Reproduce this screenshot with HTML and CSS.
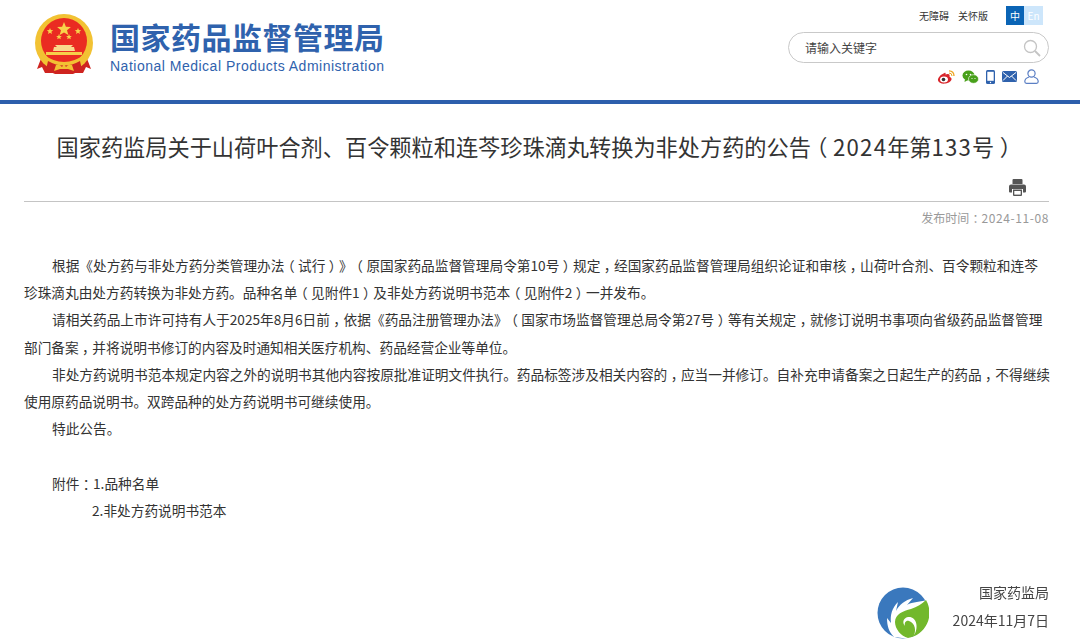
FILE: index.html
```html
<!DOCTYPE html>
<html lang="zh-CN">
  <head>
    <meta charset="UTF-8" />
    <title>国家药品监督管理局</title>
    <link rel="stylesheet" href="styles.css">
  </head>
  <body>
    <header class="site-header">
      <div class="brand">
        <svg class="emblem" viewBox="0 0 58 60" width="58" height="60">
          <path d="M7 42 L2 55 L7 53 L10 59 L48 59 L51 53 L56 55 L51 42 Z" fill="#cf2420"/>
          <circle cx="29" cy="29" r="29" fill="#f2c233"/>
          <circle cx="29" cy="27" r="23" fill="#ea2b22"/>
          <path d="M29 8 l1.900 4.700 5 .3 -3.900 3.200 1.300 4.900 -4.300 -2.700 -4.300 2.700 1.300 -4.900 -3.900 -3.200 5 -.3 Z" fill="#f8d24a"/>
          <path d="M15 14 l.9 2.100 2.300 .1 -1.800 1.500 .6 2.200 -2 -1.200 -2 1.200 .6 -2.200 -1.800 -1.500 2.300 -.1 Z" fill="#f8d24a"/>
          <path d="M43 14 l.9 2.100 2.300 .1 -1.800 1.500 .6 2.200 -2 -1.200 -2 1.200 .6 -2.200 -1.800 -1.500 2.300 -.1 Z" fill="#f8d24a"/>
          <path d="M24 20 l.8 1.900 2.100 .1 -1.600 1.300 .5 2 -1.800 -1.100 -1.800 1.100 .5 -2 -1.600 -1.300 2.100 -.1 Z" fill="#f8d24a"/>
          <path d="M34 20 l.8 1.900 2.100 .1 -1.600 1.300 .5 2 -1.800 -1.100 -1.800 1.100 .5 -2 -1.600 -1.300 2.100 -.1 Z" fill="#f8d24a"/>
          <path d="M20 31 L38 31 L36 33 L39 33 L40 37 L18 37 L19 33 L22 33 Z" fill="#f9d98c"/>
          <path d="M11 38 L47 38 L47 41 L11 41 Z" fill="#f6cf4a"/>
          <path d="M8 40 Q29 56 50 40 L52 45 Q29 62 6 45 Z" fill="#f2c233"/>
          <path d="M13 47 Q29 56 45 47 L47 56 L38 60 L20 60 L11 56 Z" fill="#cf2420"/>
          <path d="M19 57 L21 51 Q25 50 27 53 L29 50 L31 53 Q33 50 37 51 L39 57 L33 55 L25 55 Z" fill="#f2c233"/>
        </svg>
        <div class="brand-text">
          <div class="brand-cn">国家药品监督管理局</div>
          <div class="brand-en">National Medical Products Administration</div>
        </div>
      </div>
      <div class="tools">
        <div class="tools-top">
          <a class="tool-link">无障碍</a>
          <a class="tool-link">关怀版</a>
          <div class="lang">
            <span class="lang-cn">中</span><span class="lang-en">En</span>
          </div>
        </div>
        <div class="search">
          <span>请输入关键字</span>
          <svg viewBox="0 0 18 18" width="18" height="18">
            <circle cx="7.500" cy="7.500" r="6" fill="none" stroke="#c4c4c4" stroke-width="1.300"/>
            <path d="M12 12 L17 17" stroke="#c4c4c4" stroke-width="1.800"/>
          </svg>
        </div>
        <div class="social">
          <svg viewBox="0 0 18 14" width="18" height="14">
            <path d="M7.500 3 C3.500 4.500 .5 8 1 10.500 C1.500 13 5 14 8.500 13.500 C12.500 13 15 10.500 14.500 8.500 C14 7 12.500 7 12.500 6.500 C13 5 12.500 3.800 10.500 4 L8.500 4.500 C8.800 3 8.500 2.600 7.500 3 Z" fill="#d8262b"/>
            <ellipse cx="7" cy="9.500" rx="4" ry="3" fill="#fff"/>
            <circle cx="6.500" cy="9.500" r="1.800" fill="#333"/>
            <path d="M12 .8 Q17 1 17 6" fill="none" stroke="#eda520" stroke-width="1.300"/>
            <path d="M12 3 Q15 3 15 6" fill="none" stroke="#eda520" stroke-width="1"/>
          </svg>
          <svg viewBox="0 0 17 14" width="17" height="14">
            <ellipse cx="6.500" cy="5.500" rx="6" ry="5" fill="#48a01a"/>
            <path d="M3 9 L2.500 12 L6 10 Z" fill="#48a01a"/>
            <ellipse cx="11.500" cy="9" rx="5" ry="4.300" fill="#48a01a" stroke="#fff" stroke-width=".6"/>
            <circle cx="4.500" cy="4.500" r=".8" fill="#fff"/>
            <circle cx="8.500" cy="4.500" r=".8" fill="#fff"/>
            <circle cx="10" cy="8.500" r=".6" fill="#fff"/>
            <circle cx="13" cy="8.500" r=".6" fill="#fff"/>
          </svg>
          <svg viewBox="0 0 9 14" width="9" height="14">
            <rect x="0" y="0" width="9" height="14" rx="1.500" fill="#2f62ad"/>
            <rect x="1.300" y="1.800" width="6.400" height="9" fill="#fff"/>
            <circle cx="4.500" cy="12.500" r=".7" fill="#fff"/>
          </svg>
          <svg viewBox="0 0 15 11" width="15" height="11">
            <rect width="15" height="11" rx="1.500" fill="#2f62ad"/>
            <path d="M1 1.500 L7.500 6.500 L14 1.500 M1 9.500 L5.500 5 M14 9.500 L9.500 5" fill="none" stroke="#fff" stroke-width="1"/>
          </svg>
          <svg viewBox="0 0 15 15" width="15" height="15">
            <circle cx="7.500" cy="4.500" r="3.600" fill="none" stroke="#5b7fc4" stroke-width="1.200"/>
            <path d="M5 8 C2 9 .8 11 .8 12.500 Q.8 14.300 2.500 14.300 L12.500 14.300 Q14.200 14.300 14.200 12.500 C14.200 11 13 9 10 8" fill="none" stroke="#5b7fc4" stroke-width="1.200"/>
          </svg>
        </div>
      </div>
    </header>

    <main class="article">
      <h1 class="article-title">国家药监局关于山荷叶合剂、百令颗粒和连芩珍珠滴丸转换为非处方药的公告<span class="mid">（</span><span class="num">2024</span>年第<span class="num">133</span>号<span class="mid">）</span></h1>
      <div class="print-row">
        <svg viewBox="0 0 17 17" width="17" height="17">
          <path d="M4.500 0 L12.500 0 Q13.500 0 13.500 1 L13.500 5 L3.500 5 L3.500 1 Q3.500 0 4.500 0 Z" fill="#555"/>
          <path d="M2 5.500 L15 5.500 Q17 5.500 17 7.500 L17 12.500 Q17 13.500 16 13.500 L14 13.500 L14 10 L3 10 L3 13.500 L1 13.500 Q0 13.500 0 12.500 L0 7.500 Q0 5.500 2 5.500 Z" fill="#555"/>
          <path d="M4 10.500 L13 10.500 L13 16 Q13 17 12 17 L5 17 Q4 17 4 16 Z" fill="#555"/>
          <rect x="5.300" y="12" width="6.400" height="3.600" fill="#fff"/>
        </svg>
      </div>
      <div class="publish-date">发布时间<span class="mid">：</span><span class="date-num">2024-11-08</span></div>
      <div class="article-body">
        <p>根据《处方药与非处方药分类管理办法<span class="mid">（</span>试行<span class="mid">）</span>》<span class="mid">（</span>原国家药品监督管理局令第10号<span class="mid">）</span>规定<span class="mid">，</span>经国家药品监督管理局组织论证和审核<span class="mid">，</span>山荷叶合剂、百令颗粒和连芩<br>珍珠滴丸由处方药转换为非处方药。品种名单<span class="mid">（</span>见附件1<span class="mid">）</span>及非处方药说明书范本<span class="mid">（</span>见附件2<span class="mid">）</span>一并发布。</p>
        <p>请相关药品上市许可持有人于2025年8月6日前<span class="mid">，</span>依据《药品注册管理办法》<span class="mid">（</span>国家市场监督管理总局令第27号<span class="mid">）</span>等有关规定<span class="mid">，</span>就修订说明书事项向省级药品监督管理<br>部门备案<span class="mid">，</span>并将说明书修订的内容及时通知相关医疗机构、药品经营企业等单位。</p>
        <p>非处方药说明书范本规定内容之外的说明书其他内容按原批准证明文件执行。药品标签涉及相关内容的<span class="mid">，</span>应当一并修订。自补充申请备案之日起生产的药品<span class="mid">，</span>不得继续<br>使用原药品说明书。双跨品种的处方药说明书可继续使用。</p>
        <p>特此公告。</p>
        <p class="blank">&nbsp;</p>
        <p>附件<span class="mid">：</span>1.品种名单</p>
        <p class="attach-second">2.非处方药说明书范本</p>
      </div>
    </main>

    <div class="watermark">
      <svg viewBox="0 0 52 52" width="52" height="52">
        <circle cx="26" cy="26" r="25.500" fill="#3a78bd"/>
        <path d="M50 13 C42 15 34 15 30 18 L36 11 C28 13 22 18 19 24 L21 15 C15 21 13 28 14 36 L10 31 C10 39 12 45 17 50 L33 52 L50 20 Z" fill="#fff"/>
        <path d="M49 13 A25.500 25.500 0 0 1 31 51 C24 49 18 42 18 35 C18 27 26 24 34 22 C40 20 45 17 49 13 Z" fill="#72b82c"/>
        <path d="M36 50 C40 44 38 36 32 34 C29 33 27 36 28 39 C25 36 26 31 31 30 C39 29 43 40 36 50 Z" fill="#fff"/>
      </svg>
      <div class="watermark-text">
        <div>国家药监局</div>
        <div>2024年11月7日</div>
      </div>
    </div>
  </body>
</html>
```

FILE: styles.css
```css
body {
  margin: 0;
  padding: 0;
  background: #fff;
  color: #333;
  font-family: "Noto Sans CJK SC", "Liberation Sans", sans-serif;
  text-spacing-trim: space-all;
  height: 644px;
  overflow: hidden;
  position: relative;
}

/* half-width glyph padded back out, so the mark sits centred in a full em */
.mid {
  font-feature-settings: "halt";
  padding: 0 .25em;
}

.site-header {
  display: flex;
  justify-content: space-between;
  height: 100px;
  border-bottom: 4px solid #2d5fac;
}

.brand {
  display: flex;
  align-items: flex-start;
  gap: 17px;
  padding: 14px 0 0 35px;
}

.brand-cn {
  font-size: 30px;
  font-weight: 700;
  line-height: 36px;
  margin-top: 4px;
  color: #2f62ad;
  letter-spacing: .5px;
  white-space: nowrap;
}

.brand-en {
  font-family: "Liberation Sans", sans-serif;
  font-size: 14px;
  line-height: 18px;
  margin-top: 3px;
  color: #2f62ad;
  letter-spacing: .5px;
  white-space: nowrap;
}

.tools {
  width: 261px;
  padding: 6px 31px 0 0;
}

.tools-top {
  display: flex;
  align-items: center;
  height: 19px;
  font-size: 10px;
  color: #333;
}

.tool-link {
  margin-left: 131px;
}

.tool-link + .tool-link {
  margin-left: 9px;
}

.lang {
  display: flex;
  margin-left: 18px;
  font-size: 10px;
  line-height: 19px;
  text-align: center;
}

.lang-cn {
  width: 18px;
  background: #0a64b5;
  color: #fff;
}

.lang-en {
  width: 19px;
  background: #cde6fb;
  color: #fff;
}

.search {
  display: flex;
  align-items: center;
  justify-content: space-between;
  box-sizing: border-box;
  height: 31px;
  width: 261px;
  margin-top: 7px;
  padding: 0 7px 0 16px;
  border: 1px solid #c9c9c9;
  border-radius: 16px;
  font-size: 12px;
  color: #444;
}

.social {
  display: flex;
  align-items: center;
  justify-content: flex-end;
  gap: 7px;
  margin-top: 6px;
  padding-right: 10px;
}

.article {
  padding: 0 31px 0 24px;
}

.article-title {
  margin: 27px 0 0;
  font-size: 22.200px;
  font-weight: 400;
  line-height: 30px;
  text-align: center;
  color: #333;
  white-space: nowrap;
}

.num {
  letter-spacing: 1.200px;
}

.print-row {
  display: flex;
  justify-content: flex-end;
  align-items: flex-end;
  height: 20px;
  margin-top: 15px;
  padding: 0 23px 5px 0;
  border-bottom: 1px solid #c4c4c4;
}

.publish-date {
  margin-top: 7px;
  font-size: 12px;
  line-height: 18px;
  text-align: right;
  color: #999;
}

.date-num {
  letter-spacing: .6px;
}

.article-body {
  margin-top: 25px;
  font-size: 13.680px;
  line-height: 27.200px;
  white-space: nowrap;
}

.article-body p {
  margin: 0;
  text-indent: 28px;
}

.article-body .attach-second {
  text-indent: 68px;
}

.watermark {
  position: absolute;
  right: 31px;
  bottom: 5px;
  display: flex;
  align-items: flex-end;
  gap: 24px;
}

.watermark-text {
  font-size: 14px;
  line-height: 28px;
  margin-bottom: 5px;
  text-align: right;
  color: #444;
  filter: blur(.6px);
}
```
